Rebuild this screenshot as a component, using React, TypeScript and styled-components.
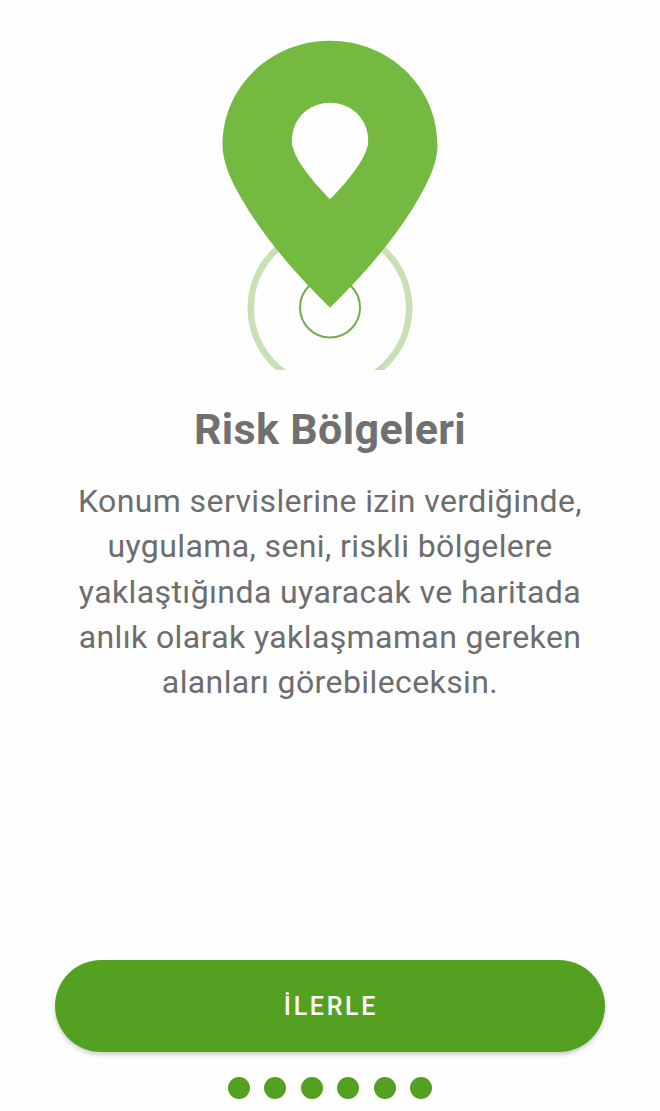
import React from 'react';
import styled, { createGlobalStyle } from 'styled-components';

const GlobalStyle = createGlobalStyle`
  *, *::before, *::after { box-sizing: border-box; }
  body { margin: 0; background: #fefefe; }
`;

const Screen = styled.main`
  display: flex;
  flex-direction: column;
  align-items: center;
  width: 660px;
  height: 1111px;
  padding: 30px 55px 12px;
  overflow: hidden;
  background: #fefefe;
  color: #6d6d6d;
  font-family: Roboto, 'Liberation Sans', sans-serif;
`;

const Illustration = styled.svg`
  display: block;
  flex: none;
  width: 240px;
  height: 340px;
`;

const Title = styled.h1`
  margin: 34px 0 0;
  color: #707070;
  font-size: 43px;
  font-weight: 700;
  line-height: 50px;
  letter-spacing: 0.35px;
  white-space: nowrap;
`;

const Description = styled.p`
  margin: 25px 0 0;
  font-size: 32px;
  line-height: 45.3px;
  letter-spacing: 0.4px;
  text-align: center;
  white-space: nowrap;
`;

const NextButton = styled.button`
  flex: none;
  width: 550px;
  height: 92.5px;
  margin-top: auto;
  padding: 1px 0 0 2px;
  border: 0;
  border-radius: 46.25px;
  background: #54a121;
  box-shadow: 0 3px 4px rgba(0, 0, 0, 0.18);
  color: #fff;
  font-family: inherit;
  font-size: 25px;
  font-weight: 500;
  letter-spacing: 2.7px;
`;

const Dots = styled.div`
  display: flex;
  flex: none;
  gap: 14.6px;
  margin-top: 25px;
`;

const Dot = styled.span`
  width: 22px;
  height: 22px;
  border-radius: 50%;
  background: #54a121;
`;

const lines = [
  'Konum servislerine izin verdiğinde,',
  'uygulama, seni, riskli bölgelere',
  'yaklaştığında uyaracak ve haritada',
  'anlık olarak yaklaşmaman gereken',
  'alanları görebileceksin.',
];

const STEP_COUNT = 6;

export default function App() {
  return (
    <>
      <GlobalStyle />
      <Screen lang="tr">
        <Illustration viewBox="210 30 240 340" aria-hidden="true">
          <circle cx="330" cy="308" r="79.2" fill="none" stroke="#c7e0b4" strokeWidth="6.6" />
          <circle cx="330" cy="307.5" r="30" fill="none" stroke="#72ad4c" strokeWidth="2" />
          <path
            fill="#74b940"
            d="M330 40.8C270.500 40.800 222.500 87 222.500 145C222.500 162 231 181 242 199.500C263 236 296 274.500 330 307.700C364 274.500 397 236 418 199.500C429 181 437.500 162 437.500 145C437.500 87 389.500 40.800 330 40.800Z"
          />
          <path
            fill="#fefefe"
            d="M330 102.800C308.500 102.800 291.800 119 291.800 141C291.800 156 311 180 330 199.300C349 180 368.200 156 368.200 141C368.200 119 351.500 102.800 330 102.800Z"
          />
        </Illustration>
        <Title>Risk Bölgeleri</Title>
        <Description>
          {lines.map((line, i) => (
            <React.Fragment key={line}>
              {i > 0 && <br />}
              {line}
            </React.Fragment>
          ))}
        </Description>
        <NextButton type="button">İLERLE</NextButton>
        <Dots>
          {Array.from({ length: STEP_COUNT }, (_, i) => (
            <Dot key={i} />
          ))}
        </Dots>
      </Screen>
    </>
  );
}
